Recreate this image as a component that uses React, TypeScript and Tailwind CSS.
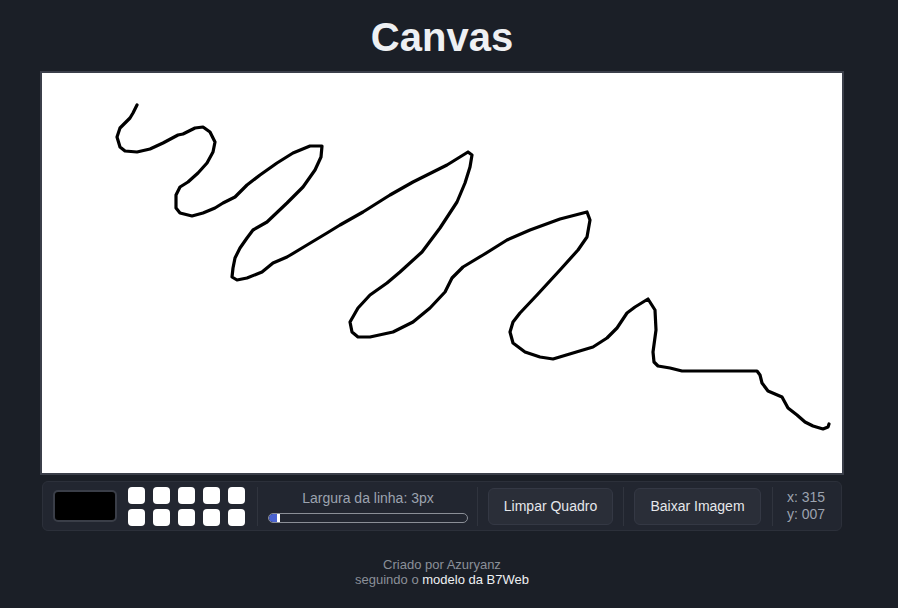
import React from "react";

const pts =
  "137,105 133,113 130,118 125,123 120,128 117,137 120,147 125,151 137,152 150,149 163,143 178,135 183,134 195,128 203,127 210,132 215,142 213,152 207,163 198,173 188,182 180,187 176,195 176,208 180,213 192,216 203,213 215,208 223,203 235,197 247,185 260,175 277,163 293,153 310,146 322,146 321,157 315,170 303,187 287,203 267,222 253,230 247,238 240,248 235,258 233,268 232,277 237,280 247,278 262,272 273,263 287,257 307,245 327,233 340,225 363,212 390,195 413,182 447,165 468,152 472,155 470,167 465,183 457,202 440,228 422,252 400,272 387,283 370,295 358,308 350,322 352,332 358,337 370,337 393,332 413,322 430,308 445,292 452,278 463,267 483,255 507,240 530,230 560,219 587,212 590,220 587,237 578,250 560,270 537,295 520,313 513,322 510,332 513,343 525,352 540,357 553,359 573,353 593,347 607,338 617,328 627,313 635,307 648,299 655,310 656,330 653,352 654,362 658,366 670,368 682,371 757,371 760,375 762,383 768,391 782,397 788,408 797,415 805,422 813,426 823,429 828,427 829,424";

function Divider() {
  return <div className="w-px h-[39px] bg-[#30343e] shrink-0" />;
}

export default function App() {
  return (
    <div
      className="min-h-[608px] w-full bg-[#1b1f27]"
      style={{ fontFamily: '"Liberation Sans", Arial, sans-serif' }}
    >
      <div className="w-[884px] flex flex-col items-center">
        <h1 className="mt-[18px] text-[40px] leading-[39px] font-bold text-[#eef0f3]">
          Canvas
        </h1>
        <div className="mt-[14px] border-2 border-[#3b3f4a] bg-white w-[804px] h-[404px]">
          <svg
            width="800"
            height="400"
            viewBox="42 73 800 400"
            className="block"
          >
            <polyline
              points={pts}
              fill="none"
              stroke="#000"
              strokeWidth={3.2}
              strokeLinejoin="round"
              strokeLinecap="round"
            />
          </svg>
        </div>
        <div className="mt-[6px] w-[800px] h-[50px] rounded-[6px] border border-[#2c303a] bg-[#222630] flex items-center">
          <div className="ml-[10px] w-[64px] h-[32px] bg-black border-2 border-[#3a3e48] rounded-[5px] shrink-0" />
          <div className="ml-[11px] grid grid-cols-5 gap-x-[8px] gap-y-[5px] shrink-0">
            {Array.from({ length: 10 }).map((_, i) => (
              <div key={i} className="w-[17px] h-[17px] bg-white rounded-[4px]" />
            ))}
          </div>
          <div className="ml-[12px]">
            <Divider />
          </div>
          <div className="ml-[10px] w-[200px] flex flex-col items-center shrink-0">
            <div className="text-[14px] leading-[16px] text-[#9ca3af] mt-[1px]">
              Largura da linha: 3px
            </div>
            <div className="mt-[7px] w-[200px] h-[10px] rounded-full border border-[#8b8f97] overflow-hidden flex">
              <div className="w-[8px] h-full bg-[#4a62cf] rounded-l-full" />
              <div className="w-[3px] h-full bg-white" />
            </div>
          </div>
          <div className="ml-[9px]">
            <Divider />
          </div>
          <button className="ml-[10px] w-[125px] h-[37px] rounded-[6px] bg-[#2a2e38] border border-[#343844] text-[14px] text-[#e5e7eb] shrink-0">
            Limpar Quadro
          </button>
          <div className="ml-[10px]">
            <Divider />
          </div>
          <button className="ml-[10px] w-[127px] h-[37px] rounded-[6px] bg-[#2a2e38] border border-[#343844] text-[14px] text-[#e5e7eb] shrink-0">
            Baixar Imagem
          </button>
          <div className="ml-[11px]">
            <Divider />
          </div>
          <div className="ml-[14px] text-[14px] leading-[17px] text-[#9ca3af]">
            <div>x: 315</div>
            <div>y: 007</div>
          </div>
        </div>
        <div className="mt-[26px] text-[13px] leading-[15px] text-center text-[#8b9099]">
          <div>Criado por Azuryanz</div>
          <div>
            seguindo o <span className="text-[#eef0f3]">modelo da B7Web</span>
          </div>
        </div>
      </div>
    </div>
  );
}
